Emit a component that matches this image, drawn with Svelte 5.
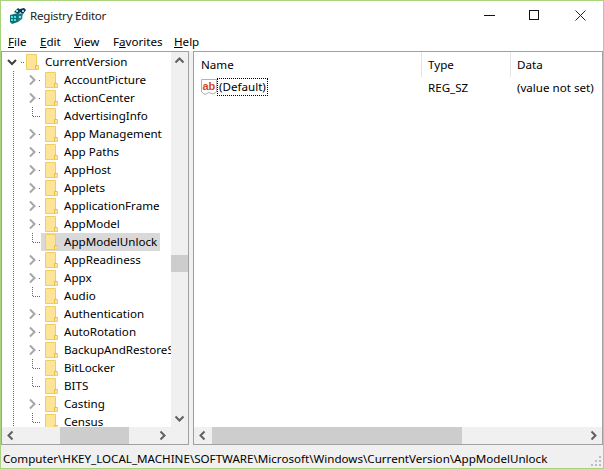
<script>
	// tree rows: leaf rows get the dotted elbow instead of a chevron
	let keys = [
		{ name: 'AccountPicture', kids: true },
		{ name: 'ActionCenter', kids: true },
		{ name: 'AdvertisingInfo' },
		{ name: 'App Management', kids: true },
		{ name: 'App Paths', kids: true },
		{ name: 'AppHost', kids: true },
		{ name: 'Applets', kids: true },
		{ name: 'ApplicationFrame', kids: true },
		{ name: 'AppModel', kids: true },
		{ name: 'AppModelUnlock', selected: true },
		{ name: 'AppReadiness', kids: true },
		{ name: 'Appx', kids: true },
		{ name: 'Audio' },
		{ name: 'Authentication', kids: true },
		{ name: 'AutoRotation', kids: true },
		{ name: 'BackupAndRestoreSettings', kids: true },
		{ name: 'BitLocker' },
		{ name: 'BITS' },
		{ name: 'Casting', kids: true },
		{ name: 'Census' }
	];
</script>

{#snippet folder()}
	<svg class="folder" width="13" height="16" viewBox="0 0 13 16">
		<path d="M0.5 0.5H10.5V11.5H12.5V15.5H0.5Z" fill="#fee496" stroke="#f0cc62" />
		<path d="M9.5 15V11.5H12" fill="none" stroke="#e8bd45" />
	</svg>
{/snippet}

{#snippet arrow(d)}
	<svg width="17" height="17" viewBox="0 0 17 17">
		<path {d} fill="none" stroke="#606060" stroke-width="2" />
	</svg>
{/snippet}

<div class="window">
	<div class="titlebar">
		<svg class="appicon" width="18" height="18" viewBox="0 0 18 18">
			<path d="M1 8L9 6V15L3 17L1 15Z" fill="#0f6f78" />
			<path d="M2 9H4V11H2ZM5 9H7V11H5ZM2 12H4V14H2ZM5 12H7V14H5Z" fill="#4fe0dc" />
			<path d="M5 5L9 1L12 3L10 7Z" fill="#123c58" />
			<path d="M11 2L15 1L17 3L14 7L11 5Z" fill="#0c2f4a" />
			<path d="M9 7L14 6L13 12L9 15Z" fill="#177f86" />
			<path d="M7 3H9V5H7ZM13 3H15V5H13ZM10 9H12V11H10Z" fill="#7fe8e8" />
		</svg>
		<span class="title">Registry Editor</span>
		<div class="controls">
			<svg width="11" height="11" viewBox="0 0 11 11"><path d="M0 5.5H11" stroke="#111" /></svg>
			<svg class="max" width="11" height="11" viewBox="0 0 11 11"><rect x="0.5" y="0.5" width="9" height="9" fill="none" stroke="#111" /></svg>
			<svg width="11" height="11" viewBox="0 0 11 11"><path d="M0.5 0.5L10.5 10.5M10.5 0.5L0.5 10.5" stroke="#222" /></svg>
		</div>
	</div>

	<div class="menu">
		<span style="--w:32px"><u>F</u>ile</span>
		<span style="--w:34px"><u>E</u>dit</span>
		<span style="--w:39px"><u>V</u>iew</span>
		<span style="--w:61px">F<u>a</u>vorites</span>
		<span style="--w:30px"><u>H</u>elp</span>
	</div>

	<div class="panes">
		<div class="pane left">
			<div class="tree">
				<div class="row root">
					<svg class="twist" width="24" height="18" viewBox="0 0 24 18">
						<path d="M6 7L10 11L14 7" fill="none" stroke="#404040" stroke-width="2" />
						<path d="M19 9.5H20M21 9.5H22" stroke="#666" />
					</svg>
					<span class="item">
						{@render folder()}
						<span class="label">CurrentVersion</span>
					</span>
				</div>
				<div class="children">
					{#each keys as key}
						<div class="row">
							<svg class="twist" width="17" height="18" viewBox="0 0 17 18">
								{#if key.kids}
									<path d="M6 4.5L10.5 9L6 13.5" fill="none" stroke="#a6a6a6" stroke-width="2" />
									<path d="M15 9.5H16" stroke="#666" />
								{:else}
									<path d="M8.5 0V9M9 9.5H17" stroke="#666" stroke-dasharray="1 1" fill="none" />
								{/if}
							</svg>
							<span class="item" class:selected={key.selected}>
								{@render folder()}
								<span class="label">{key.name}</span>
							</span>
						</div>
					{/each}
				</div>
			</div>
			<div class="vbar">
				{@render arrow('M4.5 10.5L8.5 6.5L12.5 10.5')}
				<div class="vtrack"><div class="vthumb"></div></div>
				{@render arrow('M4.5 6.5L8.5 10.5L12.5 6.5')}
			</div>
			<div class="hbar">
				{@render arrow('M10.5 4.5L6.5 8.5L10.5 12.5')}
				<div class="htrack"><div class="hthumb tree-thumb"></div></div>
				{@render arrow('M6.5 4.5L10.5 8.5L6.5 12.5')}
			</div>
			<div class="corner"></div>
		</div>

		<div class="pane right">
			<div class="list">
				<div class="head">
					<div class="col name">Name</div>
					<div class="col type">Type</div>
					<div class="col data">Data</div>
				</div>
				<div class="value">
					<div class="col name">
						<svg width="16" height="16" viewBox="0 0 16 16">
							<path d="M0.5 0.5H15.5V13L12 15L8 13.5L4 15.5L0.5 13Z" fill="#fff" stroke="#b4b4b4" />
							<text x="1.5" y="10.5" class="ab">ab</text>
						</svg>
						<span class="focus">(Default)</span>
					</div>
					<div class="col type">REG_SZ</div>
					<div class="col data">(value not set)</div>
				</div>
			</div>
			<div class="hbar">
				{@render arrow('M10.5 4.5L6.5 8.5L10.5 12.5')}
				<div class="htrack"><div class="hthumb list-thumb"></div></div>
				{@render arrow('M6.5 4.5L10.5 8.5L6.5 12.5')}
			</div>
		</div>
	</div>

	<div class="status">
		<span>Computer\HKEY_LOCAL_MACHINE\SOFTWARE\Microsoft\Windows\CurrentVersion\AppModelUnlock</span>
		<svg class="grip" width="11" height="11" viewBox="0 0 11 11">
			<path d="M8 0h2v2h-2zM4 4h2v2h-2zM8 4h2v2h-2zM0 8h2v2h-2zM4 8h2v2h-2zM8 8h2v2h-2z" fill="#bdbdbd" />
		</svg>
	</div>
</div>

<style>
	:global(body) {
		background: #fff;
	}
	.window {
		width: 604px;
		height: 469px;
		box-sizing: border-box;
		border: 1px solid #a9d37c;
		display: flex;
		flex-direction: column;
		font-family: "Noto Sans", sans-serif;
		font-size: 11.6px;
		color: #000;
		background: #f0f0f0;
		overflow: hidden;
	}
	.titlebar {
		height: 30px;
		background: #fff;
		display: flex;
		align-items: center;
		padding-left: 8px;
		flex: none;
	}
	.appicon {
		margin-right: 3px;
	}
	.title {
		letter-spacing: -0.25px;
		color: #222;
		padding-bottom: 1px;
	}
	.controls {
		margin-left: auto;
		display: flex;
		gap: 34px;
		padding-right: 17px;
		margin-top: -1px;
	}
	.max {
		margin-right: 1px;
	}
	.menu {
		height: 20px;
		background: #fff;
		display: flex;
		align-items: center;
		padding-left: 7px;
		flex: none;
	}
	.menu span {
		width: var(--w);
	}
	.panes {
		height: 394px;
		display: flex;
		gap: 4px;
		flex: none;
	}
	.pane {
		border: 1px solid #a0a0a0;
		background: #fff;
		display: grid;
		min-width: 0;
	}
	.left {
		width: 188px;
		box-sizing: border-box;
		grid-template-columns: 169px 17px;
		grid-template-rows: 375px 17px;
	}
	.right {
		flex: 1;
		grid-template-rows: 375px 17px;
		grid-template-columns: minmax(0, 1fr);
	}
	.tree {
		overflow: hidden;
		padding-top: 1px;
	}
	.row {
		height: 18px;
		display: flex;
		align-items: center;
		white-space: nowrap;
	}
	.children {
		background: repeating-linear-gradient(to bottom, #666 0 1px, transparent 1px 2px) 11px 0 / 1px 100% no-repeat;
	}
	.children .row {
		padding-left: 22px;
	}
	.twist {
		flex: none;
		overflow: visible;
	}
	.item {
		display: flex;
		align-items: center;
		height: 18px;
		padding-left: 4px;
		padding-right: 3px;
	}
	.root .item {
		padding-left: 0;
	}
	.folder {
		flex: none;
		margin-right: 6px;
	}
	.label {
		padding-bottom: 2px;
	}
	.selected {
		background: #d9d9d9;
	}
	.vbar {
		background: #f0f0f0;
		display: flex;
		flex-direction: column;
	}
	.vtrack {
		flex: 1;
	}
	.vthumb {
		height: 17px;
		width: 17px;
		margin-top: 186px;
		background: #cdcdcd;
	}
	.hbar {
		background: #f0f0f0;
		display: flex;
		height: 17px;
	}
	.htrack {
		flex: 1;
	}
	.hthumb {
		height: 17px;
		background: #cdcdcd;
	}
	.tree-thumb {
		width: 69px;
		margin-left: 41px;
	}
	.list-thumb {
		width: 250px;
		margin-left: 1px;
	}
	.corner {
		background: #f0f0f0;
	}
	.head,
	.value {
		display: flex;
		align-items: center;
	}
	.head {
		height: 25px;
	}
	.value {
		height: 20px;
	}
	.col {
		box-sizing: border-box;
		flex: none;
	}
	.name {
		width: 228px;
		padding-left: 7px;
		display: flex;
		align-items: center;
	}
	.type {
		width: 89px;
		padding-left: 6px;
	}
	.data {
		padding-left: 6px;
	}
	.head .col {
		height: 25px;
		line-height: 25px;
		border-right: 1px solid #e5e5e5;
	}
	.head .data {
		border-right: 0;
	}
	.focus {
		outline: 1px dotted #000;
		outline-offset: -1px;
		height: 18px;
		line-height: 18px;
		padding: 0 2px;
		margin-left: 0;
	}
	.ab {
		font-family: "Liberation Sans", sans-serif;
		font-weight: bold;
		font-size: 11px;
		fill: #d8441f;
	}
	.status {
		flex: 1;
		display: flex;
		align-items: center;
		padding: 3px 0 0 2px;
		position: relative;
		white-space: nowrap;
	}
	.grip {
		position: absolute;
		right: 1px;
		bottom: 1px;
	}
</style>
